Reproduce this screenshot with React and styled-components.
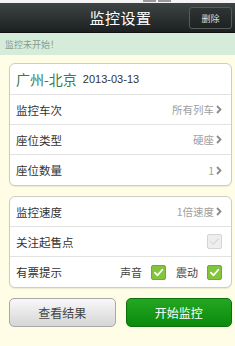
import React from "react";
import styled, { createGlobalStyle } from "styled-components";

const GlobalStyle = createGlobalStyle`
  html, body {
    margin: 0;
    padding: 0;
    background: #fffde6;
  }
  body {
    font-family: "Noto Sans CJK SC", "Liberation Sans", sans-serif;
  }
`;

const Check = ({ disabled }) => (
  <CheckBox disabled={disabled}>
    <svg width="11" height="11" viewBox="0 0 12 12">
      <path
        d="M2 6.2 L5 9 L10.2 3"
        fill="none"
        stroke={disabled ? "#c8c8c8" : "#fff"}
        strokeWidth={disabled ? 1 : 2}
        strokeLinecap="round"
        strokeLinejoin="round"
      />
    </svg>
  </CheckBox>
);

const Chevron = () => (
  <svg width="6" height="9" viewBox="0 0 6 9">
    <path d="M1 1 L4.5 4.5 L1 8" fill="none" stroke="#8a8a8a" strokeWidth="1.8" />
  </svg>
);

const App = () => {
  return (
    <Page>
      <GlobalStyle />
      <StatusStrip>
        <StatusDot />
        <StatusDot />
      </StatusStrip>
      <Header>
        <Title>监控设置</Title>
        <DeleteBtn>删除</DeleteBtn>
      </Header>
      <Notice>监控未开始！</Notice>
      <Content>
        <Card>
          <CardHead>
            <Route>广州-北京</Route>
            <DateText>2013-03-13</DateText>
          </CardHead>
          <Row>
            <Label>监控车次</Label>
            <Value>
              所有列车
              <Chevron />
            </Value>
          </Row>
          <Row>
            <Label>座位类型</Label>
            <Value>
              硬座
              <Chevron />
            </Value>
          </Row>
          <Row>
            <Label>座位数量</Label>
            <Value>
              1
              <Chevron />
            </Value>
          </Row>
        </Card>
        <Card>
          <Row>
            <Label>监控速度</Label>
            <Value>
              1倍速度
              <Chevron />
            </Value>
          </Row>
          <Row>
            <Label>关注起售点</Label>
            <Check disabled />
          </Row>
          <Row>
            <Label>有票提示</Label>
            <Options>
              <OptionText>声音</OptionText>
              <Check />
              <OptionText>震动</OptionText>
              <Check />
            </Options>
          </Row>
        </Card>
        <Buttons>
          <ActionBtn>查看结果</ActionBtn>
          <ActionBtn primary>开始监控</ActionBtn>
        </Buttons>
      </Content>
    </Page>
  );
};

export default App;

const Page = styled.div`
  width: 235px;
  height: 346px;
  display: flex;
  flex-direction: column;
  background: #fffde6;
  overflow: hidden;
`;

const StatusStrip = styled.div`
  height: 3px;
  background: #f4f4f4;
  display: flex;
  gap: 2px;
  padding-left: 143px;
`;

const StatusDot = styled.div`
  width: 13px;
  height: 2px;
  background: #9a9a9a;
`;

const Header = styled.div`
  height: 30px;
  position: relative;
  display: flex;
  align-items: center;
  justify-content: center;
  background: linear-gradient(#3e4444, #1c2020);
  border-bottom: 1px solid #111;
  box-sizing: border-box;
`;

const Title = styled.div`
  color: #fff;
  font-size: 15px;
  letter-spacing: 0.5px;
  margin-left: 6px;
`;

const DeleteBtn = styled.div`
  position: absolute;
  right: 3px;
  top: 4px;
  width: 43px;
  height: 22px;
  box-sizing: border-box;
  border: 1px solid #555b5b;
  border-radius: 3px;
  background: linear-gradient(#2e3333, #1e2222);
  color: #ddd;
  font-size: 9px;
  display: flex;
  align-items: center;
  justify-content: center;
`;

const Notice = styled.div`
  height: 22px;
  background: #d5ecda;
  color: #8a9a8e;
  font-size: 9px;
  display: flex;
  align-items: center;
  padding-left: 5px;
`;

const Content = styled.div`
  display: flex;
  flex-direction: column;
  gap: 10px;
  padding: 8px 3px 0 9px;
`;

const Card = styled.div`
  background: #fff;
  border: 1px solid #cdcdc3;
  border-radius: 6px;
  box-shadow: 0 1px 1px rgba(0, 0, 0, 0.08);
  display: flex;
  flex-direction: column;
  overflow: hidden;
`;

const CardHead = styled.div`
  height: 31px;
  box-sizing: border-box;
  display: flex;
  align-items: center;
  gap: 6px;
  padding-left: 6px;
  border-bottom: 1px solid #e2e2e2;
`;

const Route = styled.div`
  color: #3c7d46;
  font-size: 14px;
`;

const DateText = styled.div`
  color: #333;
  font-size: 11px;
  font-family: "Liberation Sans", "Noto Sans CJK SC", sans-serif;
`;

const Row = styled.div`
  height: 30px;
  box-sizing: border-box;
  display: flex;
  align-items: center;
  justify-content: space-between;
  padding: 0 9px 0 6px;
  border-bottom: 1px solid #e2e2e2;
  &:last-child {
    border-bottom: none;
  }
`;

const Label = styled.div`
  color: #333;
  font-size: 11.5px;
`;

const Value = styled.div`
  display: flex;
  align-items: center;
  gap: 2px;
  color: #a0a0a0;
  font-size: 10.5px;
`;

const Options = styled.div`
  display: flex;
  align-items: center;
  gap: 9px;
`;

const OptionText = styled.div`
  color: #444;
  font-size: 11px;
  margin-left: 1px;
`;

const CheckBox = styled.div`
  width: 15px;
  height: 15px;
  box-sizing: border-box;
  border-radius: 2px;
  display: flex;
  align-items: center;
  justify-content: center;
  background: ${(p) => (p.disabled ? "#eeeeee" : "#82c43a")};
  border: 1px solid ${(p) => (p.disabled ? "#d4d4d4" : "#6fae2c")};
`;

const Buttons = styled.div`
  display: grid;
  grid-template-columns: 1fr 1fr;
  gap: 10px;
`;

const ActionBtn = styled.div`
  height: 29px;
  box-sizing: border-box;
  border-radius: 5px;
  display: flex;
  align-items: center;
  justify-content: center;
  font-size: 12px;
  color: ${(p) => (p.primary ? "#fff" : "#444")};
  background: ${(p) =>
    p.primary
      ? "linear-gradient(#23a823, #0b8a0b)"
      : "linear-gradient(#f8f8f8, #d6d6d6)"};
  border: 1px solid ${(p) => (p.primary ? "#0c700c" : "#a8a8a8")};
`;
